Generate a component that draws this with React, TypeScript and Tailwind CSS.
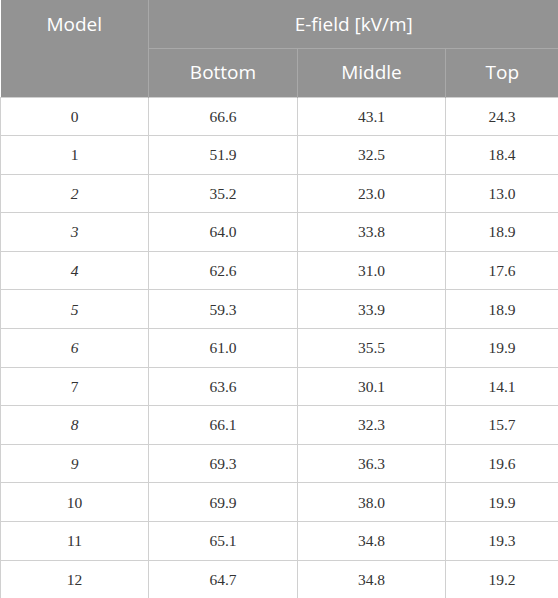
import React from "react";

type Row = {
  model: string;
  italic: boolean;
  bottom: string;
  middle: string;
  top: string;
};

const rows: Row[] = [
  { model: "0", italic: false, bottom: "66.6", middle: "43.1", top: "24.3" },
  { model: "1", italic: false, bottom: "51.9", middle: "32.5", top: "18.4" },
  { model: "2", italic: true, bottom: "35.2", middle: "23.0", top: "13.0" },
  { model: "3", italic: true, bottom: "64.0", middle: "33.8", top: "18.9" },
  { model: "4", italic: true, bottom: "62.6", middle: "31.0", top: "17.6" },
  { model: "5", italic: true, bottom: "59.3", middle: "33.9", top: "18.9" },
  { model: "6", italic: true, bottom: "61.0", middle: "35.5", top: "19.9" },
  { model: "7", italic: false, bottom: "63.6", middle: "30.1", top: "14.1" },
  { model: "8", italic: true, bottom: "66.1", middle: "32.3", top: "15.7" },
  { model: "9", italic: true, bottom: "69.3", middle: "36.3", top: "19.6" },
  { model: "10", italic: false, bottom: "69.9", middle: "38.0", top: "19.9" },
  { model: "11", italic: false, bottom: "65.1", middle: "34.8", top: "19.3" },
  { model: "12", italic: false, bottom: "64.7", middle: "34.8", top: "19.2" },
];

const App: React.FC = () => {
  return (
    <div className="w-[558px] h-[598px] bg-white">
      <table className="w-[558px] table-fixed border-collapse">
        <colgroup>
          <col className="w-[148px]" />
          <col className="w-[149px]" />
          <col className="w-[148px]" />
          <col className="w-[113px]" />
        </colgroup>
        <thead className="bg-[#939393] text-white font-['Open_Sans',sans-serif] text-[19px]">
          <tr className="h-[48px]">
            <th
              rowSpan={2}
              className="align-top pt-[10px] font-normal border-r border-[#a9a9a9]"
            >
              Model
            </th>
            <th colSpan={3} className="font-normal border-b border-[#a9a9a9]">
              E-field [kV/m]
            </th>
          </tr>
          <tr className="h-[49px]">
            <th className="font-normal border-r border-[#a9a9a9]">Bottom</th>
            <th className="font-normal border-r border-[#a9a9a9]">Middle</th>
            <th className="font-normal">Top</th>
          </tr>
        </thead>
        <tbody className="font-['Liberation_Serif',serif] text-[15.5px] text-[#333]">
          {rows.map((r) => (
            <tr key={r.model} className="h-[38.6px]">
              <td
                className={`text-center border border-[#d0d0d0] ${
                  r.italic ? "italic" : ""
                }`}
              >
                {r.model}
              </td>
              <td className="text-center border border-[#d0d0d0]">{r.bottom}</td>
              <td className="text-center border border-[#d0d0d0]">{r.middle}</td>
              <td className="text-center border border-[#d0d0d0]">{r.top}</td>
            </tr>
          ))}
        </tbody>
      </table>
    </div>
  );
};

export default App;
